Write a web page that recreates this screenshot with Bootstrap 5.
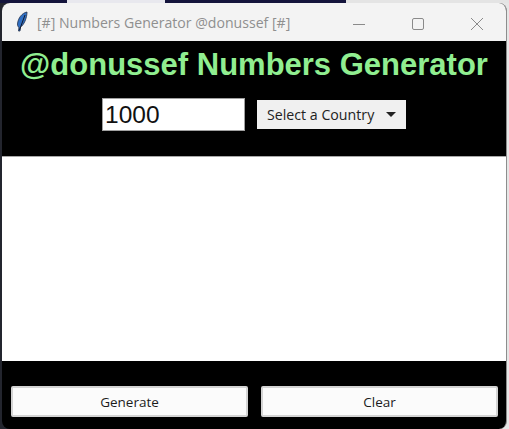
<!DOCTYPE html>
<html lang="en">
<head>
  <meta charset="UTF-8">
  <title>[#] Numbers Generator @donussef [#]</title>
  <link href="https://cdn.jsdelivr.net/npm/bootstrap@5.3.3/dist/css/bootstrap.min.css" rel="stylesheet">
  <style>
    html, body { height: 100%; }
    body {
      background: linear-gradient(90deg, #23252e 0, #23252e 254px, #e6e6e6 254px, #e6e6e6 100%);
      overflow: hidden;
    }
    .desk-strip { height: 3px; }
    .desk-navy { width: 67px; background: #14143c; }
    .desk-text { width: 98px; background: #e8e8ee; }
    .desk-navy-long { width: 181px; background: #14143c; }
    .desk-light { flex: 1 1 auto; background: #e4e4e4; }
    .app-window {
      width: 505px;
      height: 426px;
      margin-left: 2px;
      background: #000;
      border-radius: 8px;
      border-right: 1px solid #8d8d8d;
      overflow: hidden;
    }
    .title-bar {
      height: 38px;
      background: #f3f3f3;
      color: #8f8f8f;
      font: 14.100px "Open Sans", "Noto Sans", sans-serif;
    }
    .title-name { margin-left: 9px; }
    .feather { margin-left: 14px; }
    .win-btn { width: 59px; }
    .head-panel { height: 115px; }
    .app-heading {
      font: bold 31px "Liberation Sans", sans-serif;
      color: #90ee90;
      padding-top: 6px;
      margin: 0;
      line-height: 36px;
    }
    .control-row { margin-top: 15px; gap: 12px; }
    .count-input {
      width: 143px;
      height: 33px;
      border: 1px solid #a0a0a0;
      border-radius: 0;
      padding: 0 2px;
      font: 24.500px "Liberation Sans", sans-serif;
      color: #111;
      outline: none;
    }
    .country-menu {
      width: 149px;
      height: 29px;
      background: #f0f0f0;
      color: #222;
      font: 14.200px "Open Sans", "Noto Sans", sans-serif;
      padding: 0 10px;
    }
    .menu-caret {
      border-left: 5px solid transparent;
      border-right: 5px solid transparent;
      border-top: 5px solid #222;
    }
    .output-area {
      height: 205px;
      background: #fff;
      border-top: 1px solid #a8a8a8;
    }
    .foot-panel { padding: 25px 8px 0 9px; gap: 13px; }
    .foot-btn {
      flex: 1 1 0;
      height: 31px;
      background: #fbfbfb;
      color: #1c1c1c;
      border: 2px solid #d4d4d4;
      border-radius: 2px;
      font: 13.500px "Open Sans", "Noto Sans", sans-serif;
      padding: 0;
    }
  </style>
</head>
<body>
  <div class="desk-strip d-flex">
    <div class="desk-navy"></div>
    <div class="desk-text"></div>
    <div class="desk-navy-long"></div>
    <div class="desk-light"></div>
  </div>
  <div class="app-window d-flex flex-column">
    <!-- Title bar -->
    <div class="title-bar d-flex align-items-center flex-shrink-0">
      <svg class="feather" width="12" height="22" viewBox="0 0 12 22">
        <path d="M11 1C6 2 2 7 1.500 13C1.500 15 2 16 3 16L2.500 20L4 20L4.500 16C8 14 11 7 11 1Z" fill="#2f6fc4" stroke="#23304a" stroke-width="0.8"/>
        <path d="M9 4L3.500 19" stroke="#10182a" stroke-width="1"/>
      </svg>
      <span class="title-name flex-grow-1">[#] Numbers Generator @donussef [#]</span>
      <div class="win-btn text-center"><svg width="14" height="14" viewBox="0 0 14 14"><path d="M1 7.500H13" stroke="#8a8a8a"/></svg></div>
      <div class="win-btn text-center"><svg width="14" height="14" viewBox="0 0 14 14"><rect x="1.500" y="1.500" width="11" height="11" rx="1.500" fill="none" stroke="#8a8a8a"/></svg></div>
      <div class="win-btn text-center"><svg width="14" height="14" viewBox="0 0 14 14"><path d="M1 1L13 13M13 1L1 13" stroke="#8a8a8a"/></svg></div>
    </div>

    <!-- Heading and controls -->
    <div class="head-panel text-center flex-shrink-0">
      <h1 class="app-heading">@donussef Numbers Generator</h1>
      <div class="control-row d-flex justify-content-center align-items-center">
        <input type="text" class="count-input" value="1000">
        <div class="country-menu d-flex align-items-center justify-content-between">
          <span>Select a Country</span>
          <span class="menu-caret"></span>
        </div>
      </div>
    </div>

    <div class="output-area flex-shrink-0"></div>

    <!-- Buttons -->
    <div class="foot-panel d-flex">
      <button type="button" class="foot-btn">Generate</button>
      <button type="button" class="foot-btn">Clear</button>
    </div>
  </div>
  <script src="https://cdn.jsdelivr.net/npm/bootstrap@5.3.3/dist/js/bootstrap.bundle.min.js"></script>
</body>
</html>
